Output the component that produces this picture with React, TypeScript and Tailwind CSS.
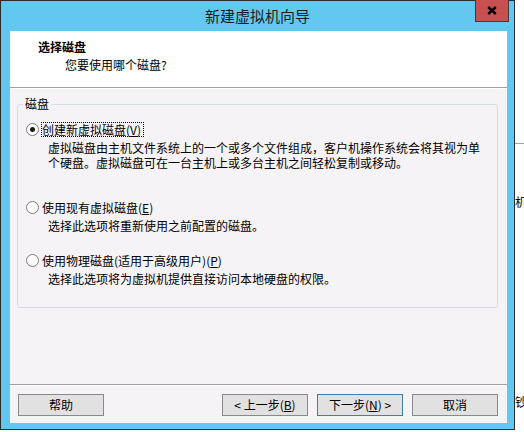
import React from "react";

function Radio({ checked = false }: { checked?: boolean }) {
  return (
    <span className="flex w-[13px] h-[13px] shrink-0 items-center justify-center rounded-full border border-[#7a7a7a] bg-white">
      {checked && <span className="block w-[5px] h-[5px] rounded-full bg-[#1a1a1a]" />}
    </span>
  );
}

function Option({
  checked,
  focused,
  label,
  hotkey,
  children,
  className,
}: {
  checked?: boolean;
  focused?: boolean;
  label: string;
  hotkey: string;
  children: React.ReactNode;
  className?: string;
}) {
  return (
    <div className={className}>
      <div className="flex h-[16px] items-center">
        <Radio checked={checked} />
        <span
          className={
            "ml-[2px] border border-dotted pr-[2px] leading-[13px] " +
            (focused ? "border-black" : "border-transparent")
          }
        >
          {label}(<span className="underline underline-offset-[1px]">{hotkey}</span>)
        </span>
      </div>
      <div className="mt-[3px] pl-[22px] leading-[15px]">{children}</div>
    </div>
  );
}

function Btn({ children, primary = false }: { children: React.ReactNode; primary?: boolean }) {
  return (
    <button
      className={
        "flex h-[22px] w-[86px] items-center justify-center border bg-[#e1e1e1] text-[12px] leading-[14px] text-black " +
        (primary ? "border-[#3c7fb1]" : "border-[#8a8a8a]")
      }
    >
      {children}
    </button>
  );
}

export default function App() {
  return (
    <div className="flex h-[432px] w-[524px] overflow-hidden bg-white font-['Noto_Sans_CJK_SC','Liberation_Sans',sans-serif] text-[12px] text-black">
      {/* wizard window */}
      <div className="relative flex h-[430px] w-[515px] shrink-0 flex-col border border-[#2b2b2b] bg-[#63c8ef]">
        <div className="flex h-[30px] shrink-0 items-center justify-center text-[15px] text-[#1e1e1e]">
          新建虚拟机向导
        </div>
        <button className="absolute right-[5px] top-[-1px] flex h-[22px] w-[34px] items-center justify-center border border-t-0 border-[#3b3b3b] bg-[#c75050]">
          <svg width="10" height="9" viewBox="0 0 10 9">
            <path d="M1.2 1 L8.8 8 M8.8 1 L1.2 8" stroke="#000" strokeWidth="2.4" />
          </svg>
        </button>

        <div className="flex flex-1 pb-[6px] pl-[9px] pr-[7px]">
          <div className="flex flex-1 flex-col bg-[#f6f3f6]">
            {/* header */}
            <div className="h-[56px] shrink-0 bg-white pl-[28px] pt-[8px] leading-[16px]">
              <div className="font-bold">选择磁盘</div>
              <div className="mt-[2px] pl-[27px]">您要使用哪个磁盘?</div>
            </div>
            <div className="h-px shrink-0 bg-[#a0a0a0]" />
            <div className="h-px shrink-0 bg-white" />

            {/* body */}
            <div className="flex-1 pl-[7px] pt-[7px]">
              <fieldset className="h-[212px] w-[481px] rounded-[3px] border border-[#d5dde3] pl-[8px] pt-[9px]">
                <legend className="ml-[-3px] px-[2px] leading-[16px]">磁盘</legend>

                <Option checked focused label="创建新虚拟磁盘" hotkey="V">
                  虚拟磁盘由主机文件系统上的一个或多个文件组成，客户机操作系统会将其视为单
                  <br />
                  个硬盘。虚拟磁盘可在一台主机上或多台主机之间轻松复制或移动。
                </Option>

                <Option className="mt-[29px]" label="使用现有虚拟磁盘" hotkey="E">
                  选择此选项将重新使用之前配置的磁盘。
                </Option>

                <Option className="mt-[19px]" label="使用物理磁盘(适用于高级用户)" hotkey="P">
                  选择此选项将为虚拟机提供直接访问本地硬盘的权限。
                </Option>
              </fieldset>
            </div>

            <div className="h-px shrink-0 bg-[#a0a0a0]" />
            <div className="h-px shrink-0 bg-white" />

            {/* footer buttons */}
            <div className="flex h-[37px] shrink-0 items-start justify-between pl-[8px] pr-[9px] pt-[8px]">
              <Btn>帮助</Btn>
              <div className="flex gap-[9px]">
                <Btn>
                  &lt; 上一步(<span className="underline underline-offset-[1px]">B</span>)
                </Btn>
                <Btn primary>
                  下一步(<span className="underline underline-offset-[1px]">N</span>) &gt;
                </Btn>
                <Btn>取消</Btn>
              </div>
            </div>
          </div>
        </div>
      </div>

      {/* window behind, clipped at the screen edge */}
      <div className="flex w-[9px] shrink-0 flex-col overflow-hidden whitespace-nowrap leading-[16px]">
        <div className="mt-[143px] h-px bg-[#6fb3dc]" />
        <div className="mt-[50px]">机</div>
        <div className="mt-[184px]">钞</div>
      </div>
    </div>
  );
}
